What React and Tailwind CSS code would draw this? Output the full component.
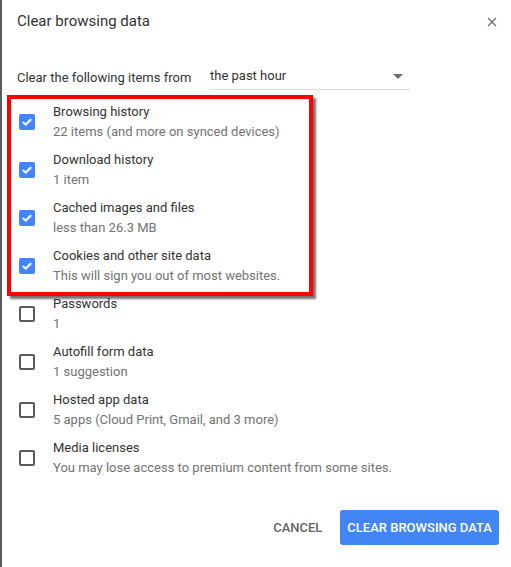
import React from 'react';

const items = [
  { title: 'Browsing history', sub: '22 items (and more on synced devices)', checked: true },
  { title: 'Download history', sub: '1 item', checked: true },
  { title: 'Cached images and files', sub: 'less than 26.3 MB', checked: true },
  { title: 'Cookies and other site data', sub: 'This will sign you out of most websites.', checked: true },
  { title: 'Passwords', sub: '1', checked: false },
  { title: 'Autofill form data', sub: '1 suggestion', checked: false },
  { title: 'Hosted app data', sub: '5 apps (Cloud Print, Gmail, and 3 more)', checked: false },
  { title: 'Media licenses', sub: 'You may lose access to premium content from some sites.', checked: false },
];

function Checkbox({ checked }) {
  if (checked) {
    return (
      <div className="w-4 h-4 rounded-[2px] bg-[#4285f4] flex items-center justify-center shrink-0">
        <svg width="12" height="12" viewBox="0 0 12 12">
          <path d="M1.8 6 L4.7 8.7 L10.2 3.2" fill="none" stroke="white" strokeWidth="2" />
        </svg>
      </div>
    );
  }
  return <div className="w-4 h-4 rounded-[2px] border-2 border-[#5a5a5a] shrink-0" />;
}

export default function App() {
  return (
    <div
      className="relative w-[511px] h-[567px] bg-white border-l-2 border-[#5b5b5b] overflow-hidden"
      style={{ fontFamily: 'Roboto, "Liberation Sans", sans-serif' }}
    >
      {/* header */}
      <div className="flex items-center justify-between pl-[15px] pr-[14px] pt-[11px]">
        <h1 className="text-[15px] leading-5 text-[#333]">Clear browsing data</h1>
        <svg width="10" height="10" viewBox="0 0 10 10" className="mt-[1px]">
          <path d="M1 1 L9 9 M9 1 L1 9" stroke="#6e6e6e" strokeWidth="1.3" />
        </svg>
      </div>

      {/* time range */}
      <div className="flex items-center pl-[15px] mt-[35px]">
        <span className="text-[13px] text-[#333] w-[193px]">Clear the following items from</span>
        <div className="relative w-[200px] h-[24px] border-b border-[#ddd] flex items-center">
          <span className="text-[13px] text-[#333] -mt-[3px]">the past hour</span>
          <svg width="10" height="6" viewBox="0 0 10 6" className="absolute right-[7px] top-[8px]">
            <path d="M0 0 L10 0 L5 5 Z" fill="#6e6e6e" />
          </svg>
        </div>
      </div>

      {/* items */}
      <div className="mt-[8px]">
        {items.map((it) => (
          <div key={it.title} className="h-12 flex items-center pl-[17px]">
            <Checkbox checked={it.checked} />
            <div className="ml-[18px] flex flex-col">
              <span className="text-[13px] leading-5 text-[#333]">{it.title}</span>
              <span className="text-[13px] leading-5 text-[#737373]">{it.sub}</span>
            </div>
          </div>
        ))}
      </div>

      {/* footer */}
      <div className="flex justify-end items-center gap-[18px] pr-[12px] mt-[28px]">
        <button className="text-[13px] font-medium text-[#646464] px-0">CANCEL</button>
        <button className="h-[35px] px-[7px] rounded-[3px] bg-[#4285f4] text-white text-[13px] font-medium">
          CLEAR BROWSING DATA
        </button>
      </div>

      {/* red highlight annotation */}
      <div className="absolute left-[5px] top-[95px] w-[306px] h-[201px] border-[4px] border-[#ff0000] shadow-[3px_3px_2px_rgba(0,0,0,0.55)] pointer-events-none" />
    </div>
  );
}
